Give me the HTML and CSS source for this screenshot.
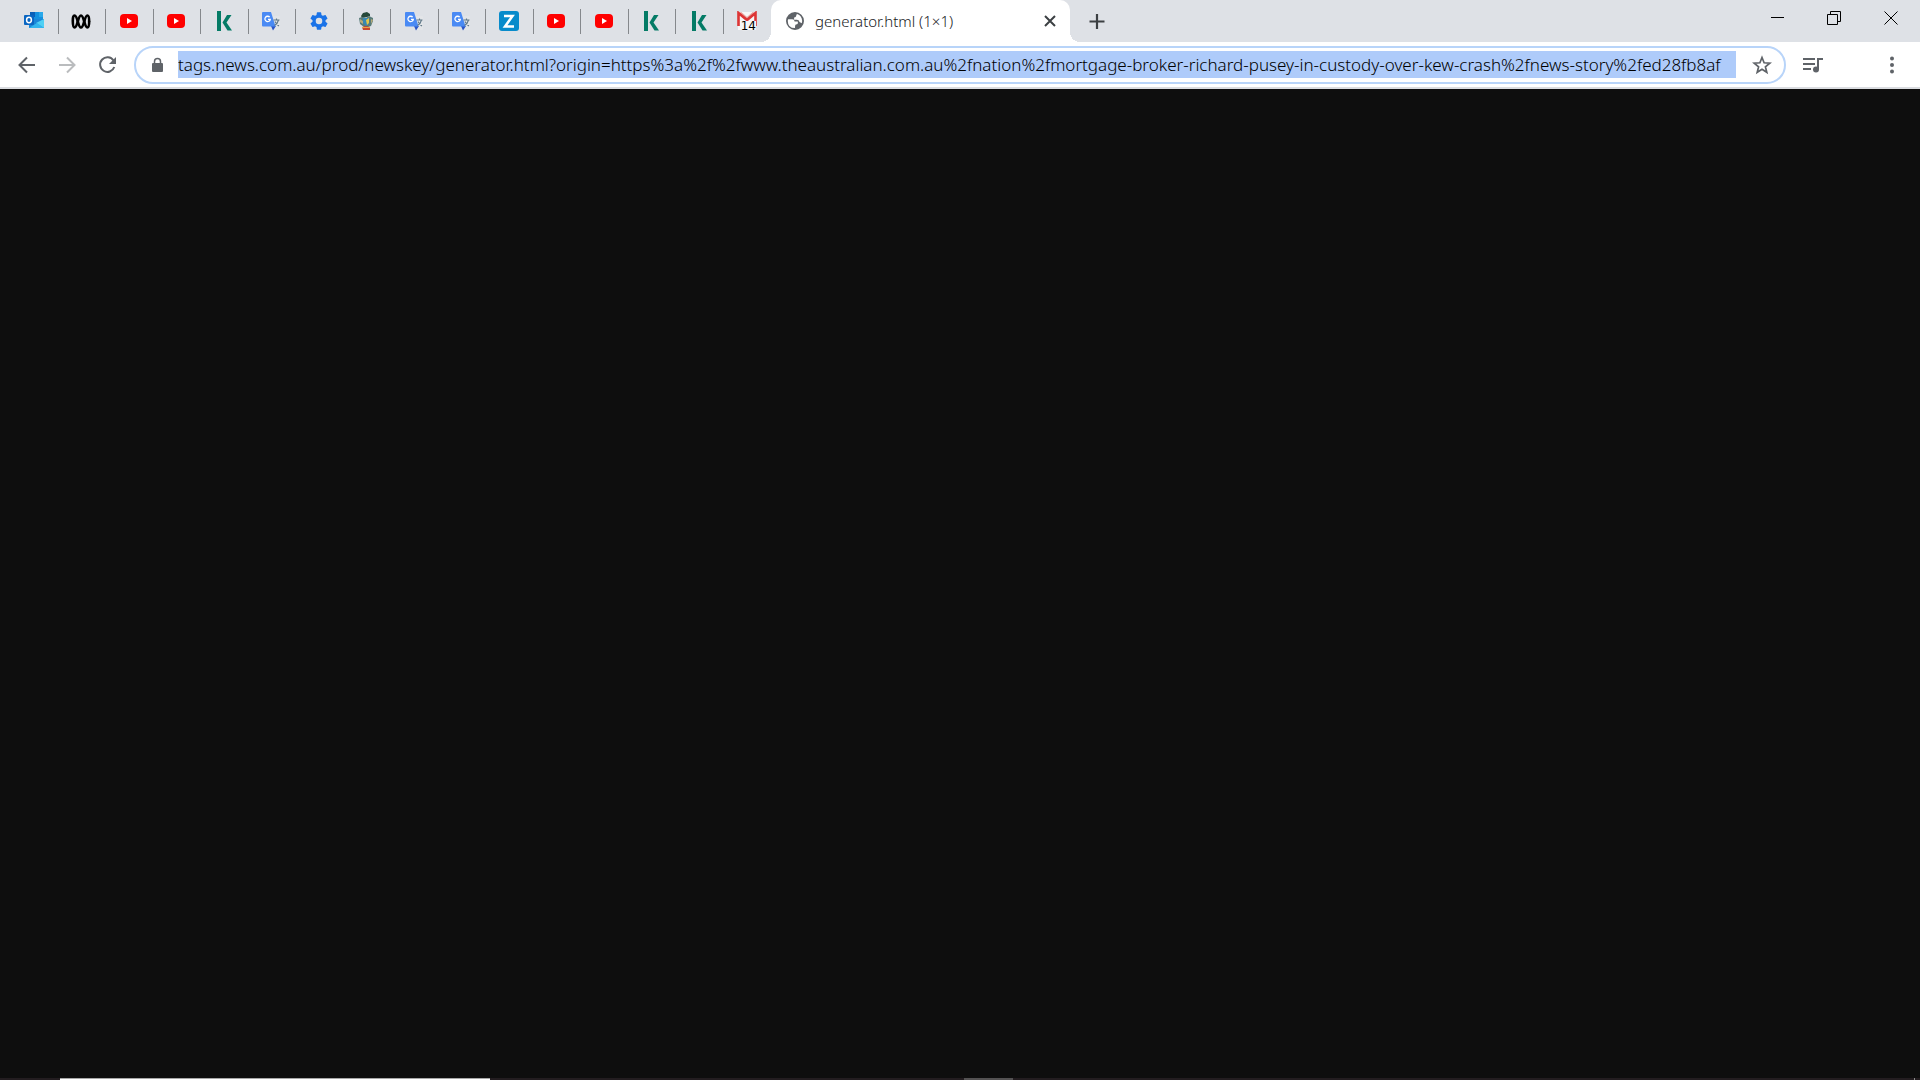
FILE: index.html
```
<!DOCTYPE html>
<html lang="en">
<head>
    <meta charset="UTF-8">
    <meta name="viewport" content="width=device-width, initial-scale=1.0">
    <title>generator.html (1×1)</title>
    <link rel="stylesheet" href="styles.css">
</head>
<body>
    <!-- shared icons -->
    <svg class="defs" aria-hidden="true">
        <symbol id="youtube" viewBox="0 0 20 20">
            <rect x="1" y="3" width="18" height="14" rx="4" fill="#f00"/>
            <path d="M8 7l5 3-5 3z" fill="#fff"/>
        </symbol>
        <symbol id="kogan" viewBox="0 0 20 20">
            <path d="M3 0h4v20H3z" fill="#047b66"/>
            <path d="M13 4h4.500l-5 7.500 5.500 8h-4.500l-5-8z" fill="#047b66"/>
        </symbol>
        <symbol id="translate" viewBox="0 0 20 20">
            <path d="M8 5h10q1 0 1 1v12q0 1-1 1h-5z" fill="#e3e5e8"/>
            <path d="M10 15h5l-3 4.500z" fill="#2a56c6"/>
            <path d="M2 1h8l4.500 14.500H2q-1 0-1-1V2q0-1 1-1z" fill="#4a8af4"/>
            <path d="M8.700 6.200A2.700 2.700 0 1 0 9.300 8.300H7" fill="none" stroke="#fff" stroke-width="1.300"/>
            <path d="M12.500 9h6M15.500 7.500V9M17.500 9q-1 4-4 5.500M14 10.500q1.500 3 4 4.500" fill="none" stroke="#607988" stroke-width="1.100"/>
        </symbol>
    </svg>

    <header class="tabstrip">
        <nav class="pinned">
            <button class="tab" aria-label="Outlook">
                <svg viewBox="0 0 20 20">
                    <path d="M6 1h13v8H6z" fill="#1490df"/>
                    <path d="M6 1h5v5H6z" fill="#0a5fb8"/>
                    <path d="M15 1h4v5h-4z" fill="#28a8ea"/>
                    <path d="M5 8h15v9H5z" fill="#1a86d8"/>
                    <path d="M20 8v9l-8-5z" fill="#50d0f4"/>
                    <path d="M5 17l8-5 7 5z" fill="#32b5ee"/>
                    <rect x="0" y="4" width="10" height="10" rx="1" fill="#0a66c2"/>
                    <ellipse cx="5" cy="9" rx="2.400" ry="2.700" fill="none" stroke="#fff" stroke-width="1.500"/>
                </svg>
            </button>
            <button class="tab" aria-label="ABC">
                <svg viewBox="0 0 20 20">
                    <g fill="none" stroke="#000" stroke-width="2.600">
                        <path d="M1.800 10C1.800 6.500 2.200 4.500 3.700 4.500C6.500 4.500 7 16.500 10 16.500S13.500 4.500 16.300 4.500C17.800 4.500 18.200 6.500 18.200 10.500"/>
                        <path d="M1.800 10C1.800 14.500 2.200 16.500 3.700 16.500C6.500 16.500 7 4.500 10 4.500S13.500 16.500 16.300 16.500C17.800 16.500 18.200 14.500 18.200 10"/>
                    </g>
                </svg>
            </button>
            <button class="tab" aria-label="YouTube"><svg><use href="#youtube"/></svg></button>
            <button class="tab" aria-label="YouTube"><svg><use href="#youtube"/></svg></button>
            <button class="tab" aria-label="Kogan"><svg><use href="#kogan"/></svg></button>
            <button class="tab" aria-label="Google Translate"><svg><use href="#translate"/></svg></button>
            <button class="tab" aria-label="Settings">
                <svg viewBox="1 1 22 22">
                    <path fill="#1a73e8" d="M19.140 12.940c.04-.3.060-.61.060-.94s-.02-.64-.07-.94l2.030-1.580a.49.490 0 0 0 .12-.61l-1.920-3.320a.49.490 0 0 0-.59-.22l-2.390.96a7 7 0 0 0-1.620-.94l-.36-2.540a.48.480 0 0 0-.48-.41h-3.840a.48.480 0 0 0-.47.41l-.36 2.540a7.400 7.400 0 0 0-1.620.94l-2.390-.96a.48.480 0 0 0-.59.22L2.740 8.870a.47.470 0 0 0 .12.610l2.030 1.580a6 6 0 0 0 0 1.880l-2.030 1.580a.49.490 0 0 0-.12.610l1.920 3.320c.12.220.37.290.59.220l2.390-.96c.5.380 1.030.7 1.620.94l.36 2.540c.05.240.24.410.48.410h3.840c.24 0 .44-.17.470-.41l.36-2.540a7.400 7.400 0 0 0 1.620-.94l2.390.96c.22.080.47 0 .59-.22l1.920-3.320a.47.470 0 0 0-.12-.61zM12 15.600a3.600 3.600 0 1 1 0-7.200 3.600 3.600 0 0 1 0 7.200z"/>
                </svg>
            </button>
            <button class="tab" aria-label="Crest">
                <svg viewBox="0 0 20 20">
                    <path d="M7 2l4-1 3 2v2l-3 1-5 1-1-2z" fill="#27493b"/>
                    <path d="M3 7l3-1 4 1 3-2 4 2v3l-2 5-3 1H8l-4-3z" fill="#587b79"/>
                    <path d="M4 8l3 2v3l-3-2zM15 8l2 1-2 4z" fill="#b6aa7a"/>
                    <path d="M7 7h6v5l-3 3-3-3z" fill="#3688b3"/>
                    <path d="M10 9l3-2v5l-2 2z" fill="#e1c548"/>
                    <path d="M6 16l4-1 4 1v3H7z" fill="#c8452c"/>
                    <path d="M6 16.500h8" stroke="#e8a046"/>
                </svg>
            </button>
            <button class="tab" aria-label="Google Translate"><svg><use href="#translate"/></svg></button>
            <button class="tab" aria-label="Google Translate"><svg><use href="#translate"/></svg></button>
            <button class="tab" aria-label="Z">
                <svg viewBox="0 0 20 20">
                    <rect width="20" height="20" rx="3" fill="#088bcb"/>
                    <path d="M5 5h8.500L6 15.500h9" fill="none" stroke="#fff" stroke-width="2.500"/>
                </svg>
            </button>
            <button class="tab" aria-label="YouTube"><svg><use href="#youtube"/></svg></button>
            <button class="tab" aria-label="YouTube"><svg><use href="#youtube"/></svg></button>
            <button class="tab" aria-label="Kogan"><svg><use href="#kogan"/></svg></button>
            <button class="tab" aria-label="Kogan"><svg><use href="#kogan"/></svg></button>
            <button class="tab" aria-label="Gmail">
                <svg viewBox="0 0 20 20">
                    <path d="M1 1h18v18H1z" fill="#f6f6f6"/>
                    <path d="M3 2l7 6 7-6" fill="none" stroke="#e9a5a2" stroke-width="3"/>
                    <path d="M1.500 15V2L10 9l8.500-7v13" fill="none" stroke="#dd3535" stroke-width="2.600"/>
                    <path d="M4 10h15v9H4z" fill="#f6f6f6"/>
                </svg>
                <span class="badge">14</span>
            </button>
        </nav>
        <div class="active">
            <svg class="globe" viewBox="2 2 20 20">
                <path fill="#5f6368" d="M12 2a10 10 0 1 0 0 20 10 10 0 0 0 0-20zM4 12q0-1 .3-2H9q2.500 0 2.500 2.500H15q1 3-2 3.500-1 0-1 3.900Q4 20 4 12zm15.500 2.500L17 13q-.5-2.500-3-2.500h-3V8q2.500 0 2.500-3l1-.8q5 1.800 5.500 7.800z"/>
            </svg>
            <span class="title">generator.html (1×1)</span>
            <button class="close" aria-label="Close tab">
                <svg viewBox="0 0 20 20"><path d="M5 5l10 10M15 5L5 15" fill="none" stroke="#3c4043" stroke-width="2"/></svg>
            </button>
        </div>
        <button class="newtab" aria-label="New tab">
            <svg viewBox="0 0 20 20"><path d="M10 3v15M2.500 10.500h15" fill="none" stroke="#3c4043" stroke-width="2.200"/></svg>
        </button>
        <div class="controls">
            <button aria-label="Minimise"><svg viewBox="0 0 14 14"><path d="M1 6.500h13" stroke="#000"/></svg></button>
            <button aria-label="Restore"><svg viewBox="0 0 14 14"><path d="M.5 3.500h10v10H.5zM3.500 3V.5h10v10H11" fill="none" stroke="#000"/></svg></button>
            <button aria-label="Close"><svg viewBox="0 0 14 14"><path d="M.5.5l13 13M13.500.5l-13 13" stroke="#000"/></svg></button>
        </div>
    </header>

    <div class="toolbar">
        <button aria-label="Back"><svg viewBox="0 0 20 20"><path d="M18 10H3M10 2.500L2.500 10l7.500 7.500" fill="none" stroke="#5f6368" stroke-width="2"/></svg></button>
        <button aria-label="Forward" disabled><svg viewBox="0 0 20 20"><path d="M2 10h15M10 2.500l7.500 7.500-7.500 7.500" fill="none" stroke="#babcbe" stroke-width="2"/></svg></button>
        <button aria-label="Reload"><svg viewBox="0 0 20 20"><path d="M16.500 5.500A7.300 7.300 0 1 0 17.300 12" fill="none" stroke="#5f6368" stroke-width="2"/><path d="M19 2v7h-7z" fill="#5f6368"/></svg></button>
        <div class="omnibox">
            <svg class="lock" viewBox="0 0 20 20">
                <rect x="5" y="8" width="11" height="9" rx="1" fill="#5f6368"/>
                <path d="M7.500 9V6.500a3 3 0 0 1 6 0V9" fill="none" stroke="#5f6368" stroke-width="1.500"/>
            </svg>
            <input class="url" type="text" aria-label="Address" spellcheck="false" value="tags.news.com.au/prod/newskey/generator.html?origin=https%3a%2f%2fwww.theaustralian.com.au%2fnation%2fmortgage-broker-richard-pusey-in-custody-over-kew-crash%2fnews-story%2fed28fb8af">
            <button class="star" aria-label="Bookmark this tab">
                <svg viewBox="0 0 20 20"><path d="M10 2.500l2.100 5.300 5.700.4-4.400 3.600 1.400 5.500-4.800-3-4.800 3 1.400-5.500-4.400-3.600 5.700-.4z" fill="none" stroke="#5f6368" stroke-width="1.700"/></svg>
            </button>
        </div>
        <button class="media" aria-label="Media controls">
            <svg viewBox="0 0 20 20"><path d="M0 4h12M0 9h12M0 14h8" stroke="#5f6368" stroke-width="2"/><path d="M15 14V4h5" fill="none" stroke="#5f6368" stroke-width="2"/><circle cx="13" cy="14.500" r="3" fill="#5f6368"/></svg>
        </button>
        <button class="menu" aria-label="Menu">
            <svg viewBox="0 0 20 20"><circle cx="10" cy="3.500" r="2" fill="#5f6368"/><circle cx="10" cy="10" r="2" fill="#5f6368"/><circle cx="10" cy="16.500" r="2" fill="#5f6368"/></svg>
        </button>
    </div>

    <main class="page"></main>

    <footer class="taskbar">
        <span class="preview"></span>
        <span class="running"></span>
        <span class="desktop"></span>
    </footer>
</body>
</html>
```

FILE: styles.css
```
*{
    margin: 0px;
    padding: 0px;
    box-sizing: border-box;
}
body{
    display: flex;
    flex-direction: column;
    height: 100vh;
    overflow: hidden;
    background-color: #0e0e0e;
    font-family: "Noto Sans", "Open Sans", sans-serif;
}
button{
    display: flex;
    align-items: center;
    justify-content: center;
    border: none;
    background: none;
}
svg{
    display: block;
    width: 20px;
    height: 20px;
}
.defs{
    position: absolute;
    width: 0px;
    height: 0px;
}
/* tabs */
.tabstrip{
    display: flex;
    height: 42px;
    padding-left: 11px;
    background-color: #dee1e6;
}
.pinned{
    display: grid;
    grid-template-columns: repeat(16, 1fr);
    align-items: center;
    width: 760px;
}
.tab{
    position: relative;
    height: 25px;
    padding-right: 1px;
    border-right: 1px solid #85888c;
}
.tab:last-child{
    border-right: none;
}
.badge{
    position: absolute;
    right: 15px;
    bottom: 0px;
    font-family: "DejaVu Sans", sans-serif;
    font-size: 12px;
    line-height: 16px;
    text-shadow: 0 0 1px #fff, 0 0 2px #fff;
}
.active{
    position: relative;
    display: flex;
    align-items: center;
    width: 299px;
    padding: 0 10px 0 15px;
    border-radius: 10px 10px 0 0;
    background-color: #fff;
}
.active::before,
.active::after{
    content: "";
    position: absolute;
    bottom: 0px;
    width: 10px;
    height: 10px;
}
.active::before{
    right: 100%;
    background: radial-gradient(circle at 0 0, transparent 10px, #fff 10px);
}
.active::after{
    left: 100%;
    background: radial-gradient(circle at 100% 0, transparent 10px, #fff 10px);
}
.globe{
    width: 18px;
    height: 18px;
}
.title{
    flex: 1;
    margin-left: 11px;
    font-size: 15px;
    font-weight: 300;
    line-height: 20px;
    color: #202124;
}
.newtab{
    margin-left: 17px;
}
.controls{
    display: flex;
    height: 36px;
    margin-left: auto;
    padding-right: 1px;
}
.controls button{
    width: 57px;
}
.controls svg{
    width: 14px;
    height: 14px;
}
/* address bar */
.toolbar{
    display: flex;
    align-items: center;
    height: 47px;
    padding: 0 8px 0 7px;
    border-bottom: 2px solid #dadce0;
    background-color: #fff;
}
.toolbar button{
    width: 40px;
    height: 36px;
}
.omnibox{
    display: flex;
    flex: 1;
    align-items: center;
    height: 38px;
    margin-left: 7px;
    border: 2px solid #b8d4f9;
    border-radius: 19px;
}
.lock{
    flex: none;
    margin: 0 11px 0 11px;
}
.url{
    flex: 1;
    min-width: 0px;
    height: 27px;
    border: none;
    outline: none;
    background-color: #aecbfa;
    color: #000;
    font-family: inherit;
    font-size: 17px;
    font-weight: 300;
    line-height: 27px;
}
.omnibox .star{
    margin: 0 2px 0 6px;
}
.toolbar .media{
    margin: 0 39px 0 7px;
}
.page{
    flex: 1;
}
/* top edge of the hidden taskbar */
.taskbar{
    display: flex;
    height: 2px;
    padding: 0 5px 0 60px;
    background-color: #231d20;
}
.preview{
    width: 430px;
    border-top: 1px solid #a8a8a8;
    background-color: #fff;
}
.running{
    width: 49px;
    margin-left: 474px;
    background-color: #545253;
}
.desktop{
    width: 1px;
    margin-left: auto;
    background-color: #8a8a8a;
}
```
